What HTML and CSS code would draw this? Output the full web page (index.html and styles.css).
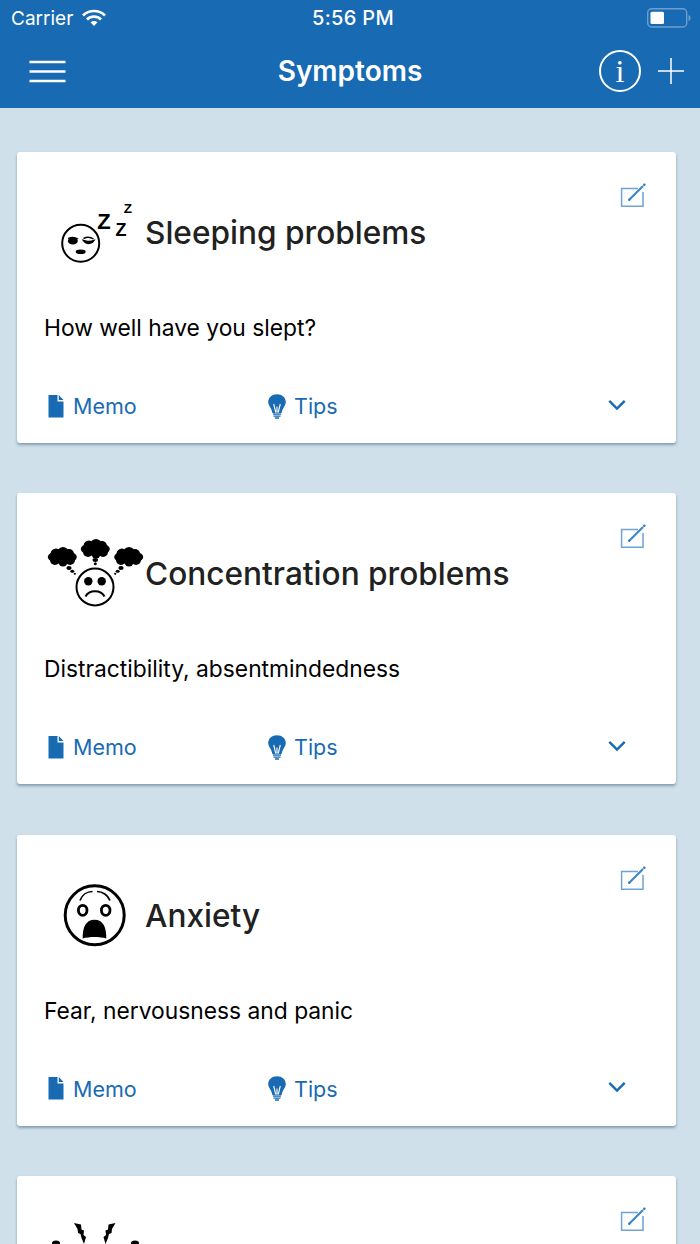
FILE: index.html
```html
<!DOCTYPE html>
<html lang="en">
<head>
<meta charset="utf-8">
<title>Symptoms</title>
<link rel="stylesheet" href="styles.css">
</head>
<body>
<svg class="defs" width="0" height="0" aria-hidden="true">
  <defs>
    <symbol id="i-edit" viewBox="0 0 26 25">
      <path d="M18 5.500H1.600V23.200H23V9" fill="none" stroke="#6ea3d3" stroke-width="1.500"/>
      <path d="M9.500 16.500 23 3" fill="none" stroke="#3f86c6" stroke-width="2.200"/>
      <circle cx="24.300" cy="1.800" r="1.300" fill="#2c79bd"/>
      <circle cx="9.200" cy="16.800" r="1.200" fill="#2c79bd"/>
    </symbol>
    <symbol id="i-memo" viewBox="0 0 16 23">
      <path d="M.5 0H9.500V6.500H15.500V22.500H.5ZM10.800 0 15.500 5H10.800Z" fill="#186ab3"/>
    </symbol>
    <symbol id="i-tips" viewBox="0 0 18 25">
      <path d="M9 .2C4 .2.200 3.500.200 8c0 3.800 3.400 6 4.300 11.200h9c.9-5.200 4.300-7.400 4.300-11.200C17.800 3.500 14 .2 9 .2Z" fill="#186ab3"/>
      <path d="M5.700 10 7.800 18.500M12.300 10 10.200 18.500M9 12.500V18.500" fill="none" stroke="#fff" stroke-width="1.100"/>
      <path d="M5 20.200h8M5.500 22.200h7M7 24h4" stroke="#186ab3" stroke-width="1.300"/>
    </symbol>
    <symbol id="i-chev" viewBox="0 0 18 12">
      <path d="M1.300 1.800 9 9.500 16.700 1.800" fill="none" stroke="#186ab3" stroke-width="2.400"/>
    </symbol>
  </defs>
</svg>

<header class="top">
  <div class="status">
    <div class="status-left">
      <span>Carrier</span>
      <svg class="wifi" width="24" height="18" viewBox="0 0 24 18">
        <path d="M1 6.500C7 .5 17 .5 23 6.500" fill="none" stroke="#fff" stroke-width="2.700"/>
        <path d="M5 10.500C9 6.700 15 6.700 19 10.500" fill="none" stroke="#fff" stroke-width="2.700"/>
        <path d="M8.500 13.300C10.500 11.500 13.500 11.500 15.500 13.300L12 17Z" fill="#fff"/>
      </svg>
    </div>
    <div class="status-time">5:56 PM</div>
    <div class="status-right">
      <svg width="44" height="20" viewBox="0 0 44 20">
        <rect x=".7" y=".7" width="39" height="18.300" rx="4" fill="none" stroke="#6d9fce" stroke-width="1.400"/>
        <rect x="3.500" y="3.700" width="13.500" height="12.300" rx="1.500" fill="#fff"/>
        <path d="M41.500 7c1.500.4 2 1.500 2 3s-.5 2.600-2 3Z" fill="#6d9fce"/>
      </svg>
    </div>
  </div>
  <nav class="nav">
    <div class="nav-side nav-left">
      <svg width="37" height="23" viewBox="0 0 37 23">
        <path d="M.5 2H36.500M.5 11.500H36.500M.5 21H36.500" stroke="#fff" stroke-width="2.700"/>
      </svg>
    </div>
    <h1 class="nav-title">Symptoms</h1>
    <div class="nav-side nav-right">
      <span class="info">i</span>
      <svg width="28" height="28" viewBox="0 0 28 28">
        <path d="M14 1V27M1 14H27" stroke="#fff" stroke-width="1.500"/>
      </svg>
    </div>
  </nav>
</header>

<main class="list">
  <article class="card">
    <svg class="edit"><use href="#i-edit"/></svg>
    <div class="head">
      <svg class="pic" viewBox="0 0 100 80">
        <circle cx="35.700" cy="50.300" r="18.500" fill="none" stroke="#000" stroke-width="2"/>
        <ellipse cx="27.800" cy="48" rx="5" ry="3.500"/>
        <path d="M23 45.500c3-1.500 7-1.500 10 .5" fill="none" stroke="#000" stroke-width="1.200"/>
        <path d="M38.500 45.500c3-1.500 7-1.500 10 .5" fill="none" stroke="#000" stroke-width="1.400"/>
        <path d="M38.500 47.500c3 4 8 4 10.500 0-3 1-7.500 1-10.500 0Z" stroke="#000" stroke-width="1.400"/>
        <ellipse cx="35.700" cy="58.700" rx="5" ry="2.300"/>
        <text class="zed" x="52.300" y="36.300" font-size="22">Z</text>
        <text class="zed" x="70.500" y="43" font-size="18">Z</text>
        <text class="zed" x="78.700" y="19.700" font-size="13.500">Z</text>
      </svg>
      <h2 class="title">Sleeping problems</h2>
    </div>
    <p class="desc">How well have you slept?</p>
    <div class="actions">
      <a class="act act-memo"><svg class="ic-memo"><use href="#i-memo"/></svg>Memo</a>
      <a class="act act-tips"><svg class="ic-tips"><use href="#i-tips"/></svg>Tips</a>
      <svg class="chev"><use href="#i-chev"/></svg>
    </div>
  </article>

  <article class="card">
    <svg class="edit"><use href="#i-edit"/></svg>
    <div class="head">
      <svg class="pic" viewBox="0 0 100 80">
        <g>
          <ellipse cx="17.300" cy="23" rx="14.500" ry="6.500"/><circle cx="11" cy="20" r="5.500"/><circle cx="18" cy="18.500" r="5.500"/><circle cx="24" cy="20" r="5"/><circle cx="10" cy="26" r="5"/><circle cx="18" cy="28" r="4.500"/><circle cx="25" cy="26" r="5"/>
          <ellipse cx="50.300" cy="15" rx="14.500" ry="6.500"/><circle cx="44" cy="12" r="5.500"/><circle cx="51" cy="10.500" r="5.500"/><circle cx="57" cy="12" r="5"/><circle cx="43" cy="18" r="5"/><circle cx="51" cy="20" r="4.500"/><circle cx="58" cy="18" r="5"/>
          <ellipse cx="83.700" cy="23" rx="14.500" ry="6.500"/><circle cx="77" cy="20" r="5.500"/><circle cx="84" cy="18.500" r="5.500"/><circle cx="90" cy="20" r="5"/><circle cx="76" cy="26" r="5"/><circle cx="84" cy="28" r="4.500"/><circle cx="91" cy="26" r="5"/>
          <ellipse cx="24" cy="34" rx="2.600" ry="2"/><ellipse cx="27.300" cy="37.300" rx="2" ry="1.500"/><circle cx="29.800" cy="39.800" r="1.100"/>
          <ellipse cx="50.300" cy="26" rx="2.800" ry="1.900"/><circle cx="50.300" cy="29.800" r="1.500"/>
          <ellipse cx="76" cy="34" rx="2.600" ry="2"/><ellipse cx="72.700" cy="37.300" rx="2" ry="1.500"/><circle cx="70.200" cy="39.800" r="1.100"/>
        </g>
        <circle cx="50" cy="53" r="18.500" fill="none" stroke="#000" stroke-width="2"/>
        <circle cx="43.300" cy="47.300" r="4.200"/><circle cx="56.700" cy="47.300" r="4.200"/>
        <path d="M40.500 62.500C44 55.500 56 55.500 59.500 62.500" fill="none" stroke="#000" stroke-width="2"/>
      </svg>
      <h2 class="title">Concentration problems</h2>
    </div>
    <p class="desc">Distractibility, absentmindedness</p>
    <div class="actions">
      <a class="act act-memo"><svg class="ic-memo"><use href="#i-memo"/></svg>Memo</a>
      <a class="act act-tips"><svg class="ic-tips"><use href="#i-tips"/></svg>Tips</a>
      <svg class="chev"><use href="#i-chev"/></svg>
    </div>
  </article>

  <article class="card">
    <svg class="edit"><use href="#i-edit"/></svg>
    <div class="head">
      <svg class="pic" viewBox="0 0 100 80">
        <circle cx="49.700" cy="39.300" r="29.500" fill="none" stroke="#000" stroke-width="3"/>
        <ellipse cx="37.700" cy="34.300" rx="4.300" ry="5" fill="none" stroke="#000" stroke-width="2.800"/>
        <ellipse cx="60.700" cy="34.300" rx="4.300" ry="5" fill="none" stroke="#000" stroke-width="2.800"/>
        <path d="M35 24.500C37 19 42 15.500 47.500 15.500M52 15.500C57.500 15.500 63 19 65 24.500" fill="none" stroke="#000" stroke-width="1.700"/>
        <path d="M37.700 62.500C37.500 51 41 43.700 49.500 43.700S61.500 51 61.300 62.500C55 60.500 44 60.500 37.700 62.500Z"/>
      </svg>
      <h2 class="title">Anxiety</h2>
    </div>
    <p class="desc">Fear, nervousness and panic</p>
    <div class="actions">
      <a class="act act-memo"><svg class="ic-memo"><use href="#i-memo"/></svg>Memo</a>
      <a class="act act-tips"><svg class="ic-tips"><use href="#i-tips"/></svg>Tips</a>
      <svg class="chev"><use href="#i-chev"/></svg>
    </div>
  </article>

  <article class="card">
    <svg class="edit"><use href="#i-edit"/></svg>
    <div class="head">
      <svg class="pic" viewBox="0 0 100 80">
        <path d="M29 6 36 7.500 36.500 12.500 39 13.500 38.500 18 41 20 39 27 36.500 21 35.500 17 33 16 32.500 12Z"/>
        <path d="M70.500 6 63.500 7.500 63 12.500 60.500 13.500 61 18 58.500 20 60.500 27 63 21 64 17 66.500 16 67 12Z"/>
        <ellipse cx="11" cy="26" rx="4" ry="2.500"/>
        <ellipse cx="90" cy="26" rx="4" ry="2.500"/>
      </svg>
    </div>
  </article>
</main>
</body>
</html>
```

FILE: styles.css
```css
* {
  box-sizing: border-box;
}

html,
body {
  margin: 0;
  height: 1244px;
  overflow: hidden;
}

body {
  background: #cfe0eb;
  font-family: Inter, Roboto, "Liberation Sans", sans-serif;
  color: #000;
}

.defs {
  display: block;
  height: 0;
}

.top {
  height: 108px;
  background: #186ab3;
  color: #fff;
}

.status {
  height: 36px;
  padding: 0 9px 0 11px;
  display: grid;
  grid-template-columns: 1fr auto 1fr;
  align-items: center;
  font-size: 19px;
}

.status-left {
  display: flex;
  align-items: center;
  gap: 9px;
}

.status-time {
  font-weight: 500;
  font-size: 20px;
  letter-spacing: .3px;
  margin-left: 4px;
}

.status-right {
  display: flex;
  justify-content: flex-end;
}

.nav {
  height: 70px;
  display: grid;
  grid-template-columns: 1fr auto 1fr;
  align-items: center;
  padding: 0 15px;
}

.nav-left {
  padding-left: 14px;
}

.nav-side {
  display: flex;
  align-items: center;
}

.nav-right {
  justify-content: flex-end;
  gap: 16px;
}

.nav-title {
  margin: 0;
  font-size: 28px;
  font-weight: 600;
}

.info {
  width: 42px;
  height: 42px;
  border: 2px solid #fff;
  border-radius: 50%;
  display: flex;
  align-items: center;
  justify-content: center;
  font-family: "Liberation Serif", serif;
  font-size: 32px;
}

.list {
  padding: 44px 24px 0 17px;
  display: flex;
  flex-direction: column;
  gap: 50.330px;
}

.card {
  position: relative;
  flex: none;
  height: 291px;
  padding: 41px 0 0 28px;
  background: #fff;
  border-radius: 3px;
  box-shadow: 0 2px 3px rgba(70, 100, 125, .55);
}

.edit {
  position: absolute;
  top: 31px;
  right: 30px;
  width: 26px;
  height: 25px;
}

.head {
  height: 80px;
  display: flex;
  align-items: center;
}

.pic {
  flex: none;
  width: 100px;
  height: 80px;
  margin-right: 0;
}

.zed {
  font-family: "Liberation Sans", sans-serif;
  font-weight: 700;
}

.title {
  margin: -1px 0 0;
  font-size: 31.600px;
  font-weight: 450;
  color: #212121;
}

.desc {
  margin: 40px 0 0 -1px;
  height: 30px;
  line-height: 30px;
  font-size: 22.800px;
}

.actions {
  margin-top: 43px;
  height: 40px;
  display: flex;
  align-items: center;
  color: #186ab3;
  font-size: 21.500px;
}

.act {
  display: flex;
  align-items: center;
}

.act-memo {
  width: 223px;
  padding-left: 3px;
}

.act-tips {
  width: 340px;
}

.ic-memo {
  width: 16px;
  height: 23px;
  margin-right: 9px;
}

.ic-tips {
  width: 18px;
  height: 25px;
  margin-right: 8px;
}

.chev {
  width: 18px;
  height: 12px;
  margin-top: -3px;
}
```
